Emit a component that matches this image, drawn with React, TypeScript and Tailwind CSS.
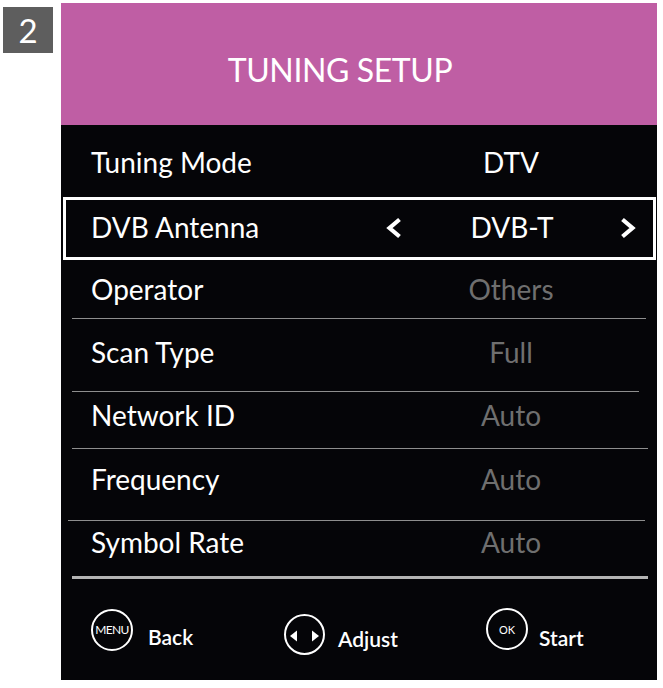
import React from "react";

type Row = {
  label: string;
  value: string;
  dim?: boolean;
};

const LeftChevron = () => (
  <svg width="16" height="22" viewBox="0 0 16 22" className="shrink-0">
    <polyline points="13.5,2.5 3.5,11 13.5,19.5" fill="none" stroke="white" strokeWidth="4.2" />
  </svg>
);

const RightChevron = () => (
  <svg width="16" height="22" viewBox="0 0 16 22" className="shrink-0">
    <polyline points="2.5,2.5 12.5,11 2.5,19.5" fill="none" stroke="white" strokeWidth="4.2" />
  </svg>
);

const Line = ({ className }: { className: string }) => <div className={className} />;

const MenuRow = ({ row, className }: { row: Row; className: string }) => (
  <div className={`flex items-center shrink-0 ${className}`}>
    <div className="w-[360px] pl-[30px] text-[28px] leading-none text-white">{row.label}</div>
    <div
      className={`w-[180px] text-center text-[28px] leading-none ${
        row.dim ? "text-[#6f6f6f]" : "text-white"
      }`}
    >
      {row.value}
    </div>
  </div>
);

export default function App() {
  return (
    <div className="w-[663px] h-[688px] bg-white flex items-start [font-family:Lato,sans-serif]">
      <div className="ml-[3px] mt-[7px] w-[50px] h-[46px] bg-[#5e5e5e] flex items-center justify-center text-white text-[33px] leading-none">
        2
      </div>

      <div className="ml-[8px] mt-[3px] w-[596px] h-[677px] bg-[#050508] flex flex-col">
        <div className="h-[122px] shrink-0 bg-[#bf5ea4] flex items-center justify-center pt-[11px] pr-[38px]">
          <span className="text-white text-[32px] leading-none tracking-[-0.4px]">TUNING SETUP</span>
        </div>

        <MenuRow row={{ label: "Tuning Mode", value: "DTV" }} className="mt-[7px] h-[63px] pb-[3px]" />

        <div className="mt-[2px] ml-[2px] mr-[1px] h-[63px] shrink-0 border-[3px] border-white flex items-center pb-[4px]">
          <div className="w-[315px] pl-[25px] text-[28px] leading-none text-white">DVB Antenna</div>
          <div className="ml-[5px] pt-[3px]">
            <LeftChevron />
          </div>
          <div className="ml-[20px] w-[180px] text-center text-[28px] leading-none text-white">DVB-T</div>
          <div className="ml-[18px] pt-[3px]">
            <RightChevron />
          </div>
        </div>

        <MenuRow row={{ label: "Operator", value: "Others", dim: true }} className="h-[58px] pb-[1px]" />
        <Line className="ml-[11px] w-[574px] h-px shrink-0 bg-[#8e8e8e]" />

        <MenuRow row={{ label: "Scan Type", value: "Full", dim: true }} className="h-[68px] pb-[2px]" />
        <Line className="mt-[4px] ml-[11px] w-[567px] h-px shrink-0 bg-[#8e8e8e]" />

        <MenuRow row={{ label: "Network ID", value: "Auto", dim: true }} className="h-[48px] pb-[2px]" />
        <Line className="mt-[8px] ml-[11px] w-[576px] h-px shrink-0 bg-[#8e8e8e]" />

        <MenuRow row={{ label: "Frequency", value: "Auto", dim: true }} className="h-[62px] pb-[2px]" />
        <Line className="mt-[9px] ml-[7px] w-[577px] h-px shrink-0 bg-[#8e8e8e]" />

        <MenuRow row={{ label: "Symbol Rate", value: "Auto", dim: true }} className="h-[44px] pb-[2px]" />
        <Line className="mt-[11px] ml-[11px] w-[576px] h-[3px] shrink-0 bg-[#b4b4b4]" />

        {/* footer hints */}
        <div className="flex items-start flex-1 text-white">
          <div className="w-[223px] flex items-start pl-[30px]">
            <div className="mt-[30px] w-[42px] h-[42px] rounded-full border-2 border-white flex items-center justify-center text-[12px] leading-none tracking-[-0.7px]">
              MENU
            </div>
            <span className="ml-[15px] mt-[47px] text-[21px] leading-none font-semibold">Back</span>
          </div>

          <div className="w-[202px] flex items-start">
            <div className="mt-[35px] w-[41px] h-[41px] rounded-full border-2 border-white flex items-center justify-center">
              <svg width="37" height="37" viewBox="0 0 37 37">
                <polygon points="4,20 11,14.5 11,25.5" fill="white" />
                <polygon points="33,20 26,14.5 26,25.5" fill="white" />
              </svg>
            </div>
            <span className="ml-[13px] mt-[49px] text-[21px] leading-none font-semibold">Adjust</span>
          </div>

          <div className="flex items-start">
            <div className="mt-[29px] w-[42px] h-[42px] rounded-full border-2 border-white flex items-center justify-center text-[11px] leading-none">
              OK
            </div>
            <span className="ml-[11px] mt-[48px] text-[21px] leading-none font-semibold">Start</span>
          </div>
        </div>
      </div>
    </div>
  );
}
